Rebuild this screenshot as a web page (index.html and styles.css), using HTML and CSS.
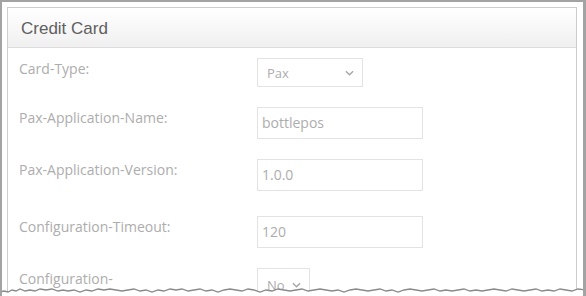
FILE: index.html
```html
<!DOCTYPE html>
<html>
<head>
<meta charset="utf-8">
<link rel="stylesheet" href="styles.css">
</head>
<body>
<div class="frame">
  <div class="panel">
    <div class="panel-heading">Credit Card</div>
    <div class="panel-body">
      <div class="row">
        <div class="label">Card-Type:</div>
        <div class="select select-wide"><span>Pax</span><svg class="chev" viewBox="0 0 10 6" width="9" height="6"><path d="M1 1 L5 5 L9 1" fill="none" stroke="#a5a5a5" stroke-width="1.5"/></svg></div>
      </div>
      <div class="row">
        <div class="label">Pax-Application-Name:</div>
        <div class="input">bottlepos</div>
      </div>
      <div class="row">
        <div class="label">Pax-Application-Version:</div>
        <div class="input">1.0.0</div>
      </div>
      <div class="row row-tall">
        <div class="label">Configuration-Timeout:</div>
        <div class="input">120</div>
      </div>
      <div class="row">
        <div class="label">Configuration-</div>
        <div class="select select-narrow"><span>No</span><svg class="chev" viewBox="0 0 10 6" width="9" height="6"><path d="M1 1 L5 5 L9 1" fill="none" stroke="#a5a5a5" stroke-width="1.5"/></svg></div>
      </div>
    </div>
  </div>
  <svg class="tear" viewBox="0 0 586 10" width="586" height="10" preserveAspectRatio="none">
    <path d="M0 5 L4 4 L8 5 L12 3 L16 4 L20 2 L25 4 L30 3 L35 4 L40 2 L46 3 L52 2 L58 4 L63 3 L68 4 L74 3 L80 5 L86 3 L92 4 L98 2 L104 3 L110 2 L116 3 L122 4 L128 3 L134 2 L140 4 L146 3 L152 5 L158 3 L164 4 L170 2 L176 3 L182 2 L188 4 L194 3 L200 2 L206 4 L212 3 L218 5 L224 3 L230 2 L236 3 L242 4 L248 2 L254 3 L260 5 L266 3 L272 4 L278 2 L284 3 L290 4 L296 3 L302 2 L308 4 L314 3 L320 2 L326 3 L332 4 L338 3 L344 5 L350 3 L356 2 L362 3 L368 4 L374 3 L380 2 L386 4 L392 3 L398 5 L404 3 L410 2 L416 3 L422 4 L428 3 L434 2 L440 4 L446 3 L452 4 L458 3 L464 2 L470 4 L476 3 L482 4 L488 3 L494 2 L500 3 L506 4 L512 2 L518 3 L524 4 L530 3 L536 2 L542 4 L548 3 L554 4 L560 2 L566 3 L572 4 L578 2 L586 3 L586 10 L0 10 Z" fill="#fff"/>
    <path d="M0 5 L4 4 L8 5 L12 3 L16 4 L20 2 L25 4 L30 3 L35 4 L40 2 L46 3 L52 2 L58 4 L63 3 L68 4 L74 3 L80 5 L86 3 L92 4 L98 2 L104 3 L110 2 L116 3 L122 4 L128 3 L134 2 L140 4 L146 3 L152 5 L158 3 L164 4 L170 2 L176 3 L182 2 L188 4 L194 3 L200 2 L206 4 L212 3 L218 5 L224 3 L230 2 L236 3 L242 4 L248 2 L254 3 L260 5 L266 3 L272 4 L278 2 L284 3 L290 4 L296 3 L302 2 L308 4 L314 3 L320 2 L326 3 L332 4 L338 3 L344 5 L350 3 L356 2 L362 3 L368 4 L374 3 L380 2 L386 4 L392 3 L398 5 L404 3 L410 2 L416 3 L422 4 L428 3 L434 2 L440 4 L446 3 L452 4 L458 3 L464 2 L470 4 L476 3 L482 4 L488 3 L494 2 L500 3 L506 4 L512 2 L518 3 L524 4 L530 3 L536 2 L542 4 L548 3 L554 4 L560 2 L566 3 L572 4 L578 2 L586 3" fill="none" stroke="#8a8a8a" stroke-width="1.3"/>
  </svg>
</div>
</body>
</html>
```
FILE: styles.css
```css
html, body {
  margin: 0;
  padding: 0;
  background: #fff;
}
.frame {
  position: relative;
  width: 586px;
  height: 296px;
  box-sizing: border-box;
  border-top: 2px solid #a3a3a3;
  border-left: 2px solid #a3a3a3;
  border-right: 3px solid #a3a3a3;
  padding: 5px 6px 0 5px;
  overflow: hidden;
}
.panel {
  border: 1px solid #cdcdcd;
  border-bottom: none;
  height: 400px;
}
.panel-heading {
  height: 40px;
  box-sizing: border-box;
  padding: 11px 0 0 13px;
  font-family: "Liberation Sans", Arial, sans-serif;
  font-size: 17px;
  line-height: 20px;
  color: #5f5f5f;
  background: linear-gradient(to bottom, #ffffff 0%, #f0f0f0 100%);
  border-bottom: 1px solid #dcdcdc;
}
.panel-body {
  padding: 10px 0 0 11px;
  font-family: "Open Sans", sans-serif;
}
.row {
  display: flex;
  align-items: flex-start;
  margin-bottom: 20px;
}
.row-tall {
  padding-top: 5px;
}
.label {
  width: 238px;
  padding-top: 1px;
  font-size: 14px;
  line-height: 19px;
  color: #adadad;
}
.input {
  width: 166px;
  height: 32px;
  box-sizing: border-box;
  border: 1px solid #e3e3e3;
  padding: 0 4px;
  font-size: 14px;
  line-height: 30px;
  color: #adadad;
}
.select {
  height: 29px;
  box-sizing: border-box;
  border: 1px solid #e3e3e3;
  display: flex;
  align-items: center;
  justify-content: space-between;
  padding: 0 8px 0 9px;
  font-size: 13px;
  color: #adadad;
}
.select-wide {
  width: 106px;
}
.select-narrow {
  width: 53px;
  padding-top: 4px;
}
.chev {
  display: block;
}
.tear {
  position: absolute;
  left: -2px;
  top: 285px;
  display: block;
}
```
